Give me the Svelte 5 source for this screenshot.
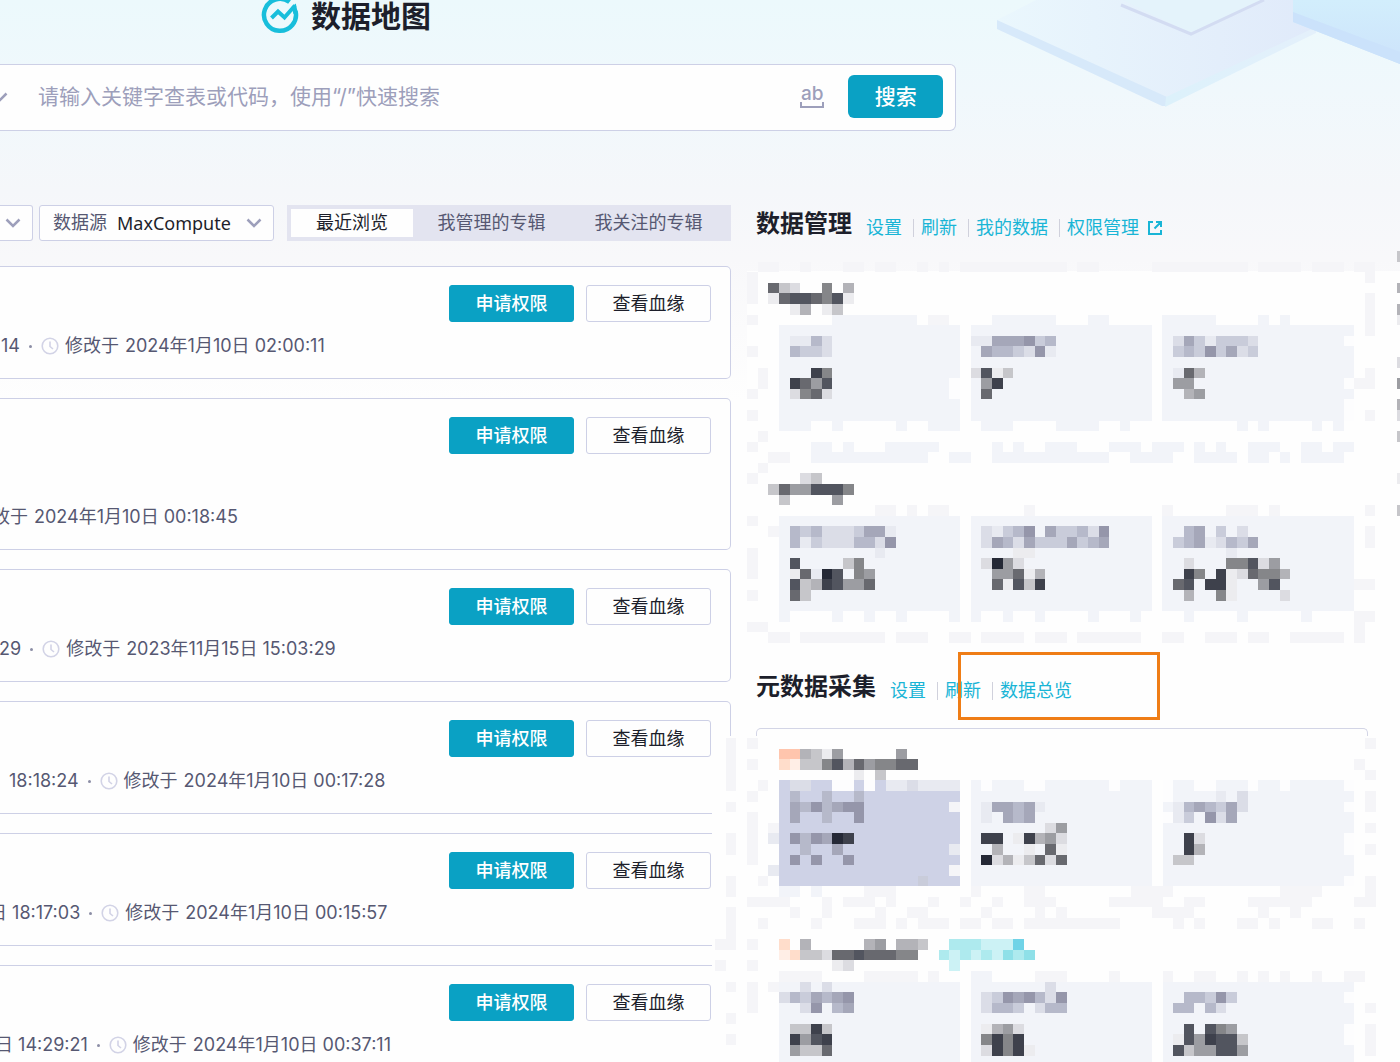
<script>
  const tabs = ['最近浏览', '我管理的专辑', '我关注的专辑'];
  let active = $state(0);

  const tables = [
    { lead: '14', date: '2024年1月10日 02:00:11', shift: 1 },
    { lead: '', date: '2024年1月10日 00:18:45', shift: -26, tall: true },
    { lead: '29', date: '2023年11月15日 15:03:29', shift: -1 },
    { lead: '18:18:24', date: '2024年1月10日 00:17:28', shift: 9 },
    { lead: '日 18:17:03', date: '2024年1月10日 00:15:57', shift: -11 },
    { lead: '日 14:29:21', date: '2024年1月10日 00:37:11', shift: -5 }
  ];

  const palette = {
    0: '#252936', 1: '#3e414c', 2: '#52555f', 3: '#68696f', 4: '#858689',
    5: '#9c9da2', 6: '#b3b3b8', 7: '#c6c6ca', 8: '#dcdce1', 9: '#ececef',
    a: '#9596aa', b: '#a5a7b9', c: '#b6b9ca', d: '#c9ccda', e: '#dbdde7', f: '#e8eaf1',
    t: '#f2f4f9', n: '#f5f5f8', w: '#fdfdfe', u: '#ced2e6',
    o: '#ffc5ad', p: '#ffddcb', q: '#ffeee6',
    x: '#70d3e7', y: '#8fe0e8', z: '#aeeaee', v: '#ccf2f5'
  };

  // Blocks: [column, row, width, height, colour key]
  const manageBlocks = [
    [3, 6, 17, 9, 't'], [21, 6, 17, 9, 't'], [39, 6, 18, 9, 't'],
    [3, 24, 17, 9, 't'], [21, 24, 17, 9, 't'], [39, 24, 18, 9, 't'],
    [8, 5, 8, 1, 't'], [17, 5, 2, 1, 'n'], [23, 5, 6, 1, 't'], [32, 5, 2, 1, 't'], [39, 5, 5, 1, 't'], [48, 5, 1, 1, 't'], [50, 5, 1, 1, 't'],
    [19, 11, 1, 2, 'w'], [56, 7, 1, 1, 'w'], [56, 11, 1, 1, 'w'], [56, 13, 1, 2, 'w'],
    [3, 15, 3, 1, 't'], [8, 15, 1, 1, 't'], [14, 15, 1, 1, 't'], [17, 15, 3, 1, 't'], [22, 15, 3, 1, 't'], [29, 15, 4, 1, 't'], [35, 15, 1, 1, 't'], [46, 15, 1, 1, 't'], [48, 15, 1, 1, 't'], [53, 15, 1, 1, 't'], [55, 15, 1, 1, 't'],
    [1, 0, 2, 1, 'n'], [5, 0, 1, 1, 'n'], [9, 0, 2, 1, 'n'], [12, 0, 2, 1, 'n'], [16, 0, 1, 1, 'n'], [18, 0, 1, 1, 'n'], [20, 0, 10, 1, 'n'], [31, 0, 2, 1, 'n'], [38, 0, 9, 1, 'n'], [48, 0, 4, 1, 'n'], [53, 0, 3, 1, 'n'], [57, 0, 2, 1, 'n'],
    [0, 1, 1, 3, 'n'], [0, 5, 1, 1, 'n'], [0, 8, 1, 1, 'n'], [1, 10, 1, 2, 'n'], [0, 12, 1, 1, 'n'], [0, 14, 1, 1, 'n'], [1, 16, 1, 1, 'n'], [0, 17, 1, 1, 'n'], [2, 18, 2, 1, 'n'], [1, 19, 1, 1, 'n'], [0, 20, 1, 1, 'n'],
    [0, 24, 1, 1, 'n'], [0, 27, 1, 3, 'n'], [2, 25, 1, 1, 'n'], [0, 31, 1, 1, 'n'], [0, 34, 2, 1, 'n'],
    [58, 1, 1, 1, 'n'], [58, 3, 1, 4, 'n'], [58, 10, 1, 2, 'n'], [57, 11, 1, 1, 'n'], [58, 14, 1, 1, 'n'], [58, 23, 1, 1, 'n'], [58, 25, 1, 2, 'n'], [57, 30, 2, 1, 'n'], [57, 33, 2, 1, 'n'], [57, 34, 1, 2, 'n'],
    [6, 17, 2, 1, 't'], [9, 17, 1, 1, 't'], [13, 17, 5, 1, 't'], [23, 17, 1, 1, 't'], [25, 17, 1, 1, 't'], [28, 17, 3, 1, 't'], [34, 17, 3, 1, 't'], [38, 17, 3, 1, 't'], [42, 17, 1, 1, 't'], [44, 17, 1, 1, 't'], [47, 17, 3, 1, 't'], [52, 17, 2, 1, 't'], [55, 17, 2, 1, 't'],
    [6, 18, 11, 1, 't'], [19, 18, 2, 1, 't'], [23, 18, 11, 1, 't'], [36, 18, 4, 1, 't'], [42, 18, 4, 1, 't'], [47, 18, 2, 1, 't'], [50, 18, 1, 1, 't'], [52, 18, 2, 1, 't'], [54, 18, 2, 1, 't'],
    [12, 23, 2, 1, 'n'], [15, 23, 1, 1, 'n'], [17, 23, 2, 1, 'n'], [26, 23, 1, 1, 'n'], [39, 23, 1, 1, 'n'], [45, 23, 3, 1, 'n'], [49, 23, 1, 1, 'n'],
    [3, 33, 1, 1, 't'], [8, 33, 1, 1, 't'], [11, 33, 1, 1, 't'], [14, 33, 1, 1, 't'], [19, 33, 1, 1, 't'], [21, 33, 1, 1, 't'], [24, 33, 1, 1, 't'], [27, 33, 1, 1, 't'], [32, 33, 1, 1, 't'], [36, 33, 1, 1, 't'], [41, 33, 1, 1, 't'], [46, 33, 1, 1, 't'], [52, 33, 1, 1, 't'],
    [2, 35, 2, 1, 'n'], [5, 35, 8, 1, 'n'], [14, 35, 3, 1, 'n'], [19, 35, 2, 1, 'n'], [22, 35, 4, 1, 'n'], [27, 35, 3, 1, 'n'], [31, 35, 6, 1, 'n'], [39, 35, 2, 1, 'n'], [43, 35, 3, 1, 'n'], [47, 35, 2, 1, 'n'], [51, 35, 5, 1, 'n'],
    [61, -1, 1, 1, '7'], [61, 2, 1, 1, '6'], [61, 4, 1, 1, '6'], [61, 5, 1, 1, '9'], [61, 9, 1, 1, '8'], [61, 11, 1, 1, '5'], [61, 13, 1, 1, '6'], [61, 14, 1, 1, '8'], [61, 16, 1, 1, '7'], [61, 20, 1, 1, '9'], [61, 23, 1, 1, '7']
  ];
  // Sprites: [column, row, rows of colour keys]
  const manageSprites = [
    [2, 2, ['378..4.6', '93223429', '..96.97']],
    [4, 7, ['ffce', 'cdde', '', '..14', '1352', '8438']],
    [21, 7, ['ffbbbadc', '.bccdeaf', '', '8297', '.51', '.3']],
    [40, 7, ['ebdfddde', 'dcdadbed', '', 'f36', '55', '.65']],
    [2, 20, ['...87', '73552224', '.7....5']],
    [4, 25, ['cdceeedbbf', 'cfdeeeccea', '........f', '2....74', '93f02.45', '27612553', '37']],
    [22, 25, ['efdca.bddcea', 'ebcebdddbdcb', '...99', '8058', '.55396', '.39271']],
    [40, 25, ['.cb.d.e', 'dcbfecdb', '.....f', '.8...44285', '.14.1983446', '32.119..52', '.6..49....8']]
  ];

  const collectBlocks = [
    [3, 4, 17, 10, 'u'], [21, 4, 17, 10, 't'], [39, 4, 18, 10, 't'],
    [3, 23, 17, 8, 't'], [21, 23, 17, 8, 't'], [39, 23, 18, 8, 't'],
    [4, 4, 2, 1, 'e'], [8, 4, 2, 1, 'w'], [11, 4, 1, 1, 'w'], [13, 4, 2, 1, 'f'], [15, 4, 1, 1, 'e'], [16, 4, 4, 1, 'f'], [19, 6, 1, 1, 'n'], [19, 10, 1, 1, 'f'], [19, 12, 1, 1, 'n'], [16, 13, 1, 1, 'd'],
    [2, 8, 1, 1, 'n'], [2, 9, 1, 1, 'f'], [2, 12, 1, 1, 'f'],
    [22, 4, 1, 1, 'w'], [26, 4, 2, 1, 'w'], [34, 4, 1, 1, 'w'], [39, 4, 1, 2, 'w'], [42, 4, 2, 1, 'w'], [47, 4, 1, 1, 'w'], [50, 4, 1, 1, 'w'], [56, 4, 1, 1, 'w'], [56, 6, 1, 1, 'w'], [56, 9, 1, 2, 'w'], [39, 7, 1, 1, 'w'], [56, 13, 1, 1, 'w'],
    [-2, 0, 1, 5, 'n'], [-2, 6, 1, 1, 'n'], [-2, 9, 1, 2, 'n'], [-2, 13, 1, 2, 'n'], [-2, 16, 1, 3, 'n'], [-3, 19, 2, 1, 'n'], [-3, 21, 1, 1, 'n'], [-2, 23, 1, 1, 'n'], [-2, 26, 1, 1, 'n'], [-2, 28, 1, 1, 'n'],
    [0, 0, 1, 1, 'n'], [0, 2, 1, 1, 'n'], [1, 4, 1, 1, 'n'], [0, 5, 1, 1, 'n'], [0, 7, 1, 5, 'n'], [1, 13, 1, 1, 'n'], [0, 15, 4, 1, 'n'], [1, 17, 1, 1, 'n'], [0, 19, 1, 1, 'n'], [0, 21, 1, 1, 'n'], [0, 23, 1, 3, 'n'],
    [3, 14, 2, 1, 't'], [6, 14, 1, 1, 't'], [11, 14, 3, 1, 'n'], [21, 14, 1, 1, 'n'], [26, 14, 2, 1, 'n'], [36, 14, 4, 1, 'n'], [50, 14, 4, 1, 'n'],
    [7, 15, 1, 2, 'n'], [9, 15, 3, 1, 'n'], [13, 15, 1, 1, 'n'], [17, 15, 1, 1, 'n'], [20, 15, 1, 1, 'n'], [23, 15, 1, 1, 'n'], [26, 15, 3, 1, 'n'], [34, 15, 5, 1, 'n'], [41, 15, 2, 1, 'n'], [47, 15, 6, 1, 'n'], [57, 15, 2, 1, 'n'],
    [4, 16, 1, 1, 'n'], [12, 16, 1, 1, 'n'], [15, 16, 2, 1, 'n'], [22, 16, 1, 1, 'n'], [27, 16, 1, 1, 'n'], [29, 16, 1, 1, 'n'], [38, 16, 4, 1, 'n'], [48, 16, 1, 1, 'n'], [51, 16, 1, 1, 'n'],
    [6, 17, 1, 1, 'n'], [10, 17, 3, 1, 'n'], [14, 17, 1, 1, 'n'], [16, 17, 3, 1, 'n'], [20, 17, 2, 1, 'n'], [23, 17, 2, 1, 'n'], [26, 17, 9, 1, 'n'], [40, 17, 1, 1, 'n'], [42, 17, 1, 1, 'n'], [46, 17, 2, 1, 'n'], [49, 17, 1, 1, 'n'], [53, 17, 2, 1, 'n'], [57, 17, 1, 1, 'n'],
    [3, 22, 4, 1, 'n'], [11, 22, 5, 1, 'n'], [17, 22, 1, 1, 'n'], [21, 22, 2, 1, 't'], [27, 22, 3, 1, 'n'], [34, 22, 1, 1, 'n'], [39, 22, 1, 1, 'n'], [42, 22, 2, 1, 'n'], [46, 22, 1, 1, 'n'], [48, 22, 1, 1, 'n'], [50, 22, 1, 1, 'n'], [53, 22, 1, 1, 'n'], [56, 22, 2, 1, 'n'],
    [2, 23, 1, 1, 'n'], [56, 24, 1, 1, 'w'], [56, 27, 1, 2, 'w'],
    [58, 0, 1, 1, 'n'], [57, 2, 1, 1, 'n'], [58, 3, 1, 1, 'n'], [58, 5, 1, 2, 'n'], [58, 8, 1, 1, 'n'], [58, 10, 1, 1, 'n'], [58, 13, 1, 2, 'n'], [58, 25, 1, 1, 'n'], [58, 27, 1, 3, 'n']
  ];
  const collectSprites = [
    [3, 1, ['oo6795.....5', 'pq77426354433', '.......9.7']],
    [4, 5, ['c..c..c', 'bcacbaa', 'b..c..a', '', 'acab01', '.c..b', 'a.a..a']],
    [22, 6, ['fbbcbf', 'f.bcb', '......85', '11.91658', '.6..9.39', '08697383']],
    [40, 5, ['....f.e', 'fcbcdbe', 'fd.aeb', '', '.18', '.16', '77']],
    [3, 19, ['p.6.....65.667', 'qp77833233344', '.....98']],
    [18, 19, ['.zzzvvvx', 'zvzvzvyzy', '.v']],
    [3, 23, ['..e.e', 'ecdbcba', '..ea.cb', '', '.7717', '.1521', '.5773']],
    [22, 23, ['......e', 'edabacea', 'eccd.ecc', '', '9658', '4141', '81419']],
    [40, 24, ['.ccdad', 'cc.ce', '', '.2.245', '9251227', '2755225']]
  ];

  function cells(blocks, sprites) {
    const out = blocks.map(([x, y, w, h, k]) => ({ x, y, w, h, fill: palette[k] }));
    for (const [c, r, rows] of sprites) {
      rows.forEach((line, j) => {
        [...line].forEach((k, i) => {
          if (k !== '.') out.push({ x: c + i, y: r + j, w: 1, h: 1, fill: palette[k] });
        });
      });
    }
    return out;
  }

  const manageCells = cells(manageBlocks, manageSprites);
  const collectCells = cells(collectBlocks, collectSprites);
</script>

{#snippet chevron()}
  <svg class="chevron" viewBox="0 0 16 10" aria-hidden="true"><path d="M1.500 1.500 8 8l6.500-6.500" /></svg>
{/snippet}

<div class="page">
  <svg class="decor" viewBox="0 0 404 108" aria-hidden="true">
    <defs>
      <linearGradient id="slab" x1="0" y1="0" x2="1" y2="0">
        <stop offset="0" stop-color="#eaf7fd" />
        <stop offset="1" stop-color="#e0eafa" />
      </linearGradient>
      <linearGradient id="edge" x1="0" y1="0" x2="1" y2="0">
        <stop offset="0" stop-color="#dcf1fb" />
        <stop offset="1" stop-color="#e4f0fb" />
      </linearGradient>
      <linearGradient id="cube" x1="0" y1="0" x2="0" y2="1">
        <stop offset="0" stop-color="#d2eefc" />
        <stop offset="1" stop-color="#cde3fb" />
      </linearGradient>
    </defs>
    <path d="M1 20 40 0H320V29L170 98Z" fill="url(#slab)" />
    <path d="M1 20V29L166 106H171V97Z" fill="#d7e9fa" />
    <path d="M169 107 320 33V27L170 97Z" fill="url(#edge)" />
    <path d="M127 0 194 33 266 0Z" fill="#e4f3fb" />
    <path d="M125 5 195 34 268 0" fill="none" stroke="#d3dcf2" stroke-width="3" />
    <path d="M297 0H404V64L297 22Z" fill="url(#cube)" />
    <path d="M297 12 404 52V64L297 22Z" fill="#cbe2fb" />
  </svg>

  <header class="brand">
    <svg class="logo" viewBox="0 0 38 38" aria-hidden="true">
      <path d="M28.500 6A16 16 0 1 0 34.500 15" fill="none" stroke="#18bedb" stroke-width="4.500" />
      <path d="M10.500 22 17 15.500 23.500 21.500 34 9.500" fill="none" stroke="#18bedb" stroke-width="4" />
      <path d="M30.500 11 34.800 7.500 37 18H32.500Z" fill="#18bedb" />
    </svg>
    <h1>数据地图</h1>
  </header>

  <form class="search" onsubmit={(e) => e.preventDefault()}>
    <button type="button" class="scope" aria-label="搜索范围">{@render chevron()}</button>
    <input type="text" aria-label="搜索" placeholder="请输入关键字查表或代码，使用“/”快速搜索" />
    <button type="button" class="exact" aria-label="全词匹配"><span>ab</span><i></i></button>
    <button type="submit" class="submit">搜索</button>
  </form>

  <main>
    <section class="browse">
      <div class="filters">
        <button type="button" class="cut" aria-label="类型">{@render chevron()}</button>
        <div class="source">
          <label for="source">数据源</label>
          <select id="source"><option>MaxCompute</option></select>
          {@render chevron()}
        </div>
        <div class="tabs">
          {#each tabs as tab, i}
            <button type="button" class:active={active === i} onclick={() => (active = i)}>{tab}</button>
          {/each}
        </div>
      </div>

      {#each tables as t}
        <article class="card" class:tall={t.tall}>
          <div class="actions">
            <button type="button" class="primary">申请权限</button>
            <button type="button">查看血缘</button>
          </div>
          <p class="meta" style:margin-left="{t.shift}px">
            {#if t.lead}
              <span>{t.lead}</span><b></b>
              <svg class="clock" viewBox="0 0 18 18" aria-hidden="true">
                <circle cx="9" cy="9" r="7.800" /><path d="M9 4.500V9.500L12 12" />
              </svg>
            {/if}
            <span>修改于</span>
            <span class="date">{t.date}</span>
          </p>
        </article>
      {/each}
    </section>

    <aside>
      <div class="head">
        <h2>数据管理</h2>
        <nav>
          <a href="#settings">设置</a>
          <a href="#refresh">刷新</a>
          <a href="#mine">我的数据</a>
          <a href="#access">权限管理
            <svg class="ext" viewBox="0 0 16 16" aria-hidden="true"><path d="M6 2H2V14H14V10M9 2H14V7M14 2 7.500 8.500" /></svg>
          </a>
        </nav>
      </div>
      <svg class="mosaic" viewBox="0 -1 61.300 37" preserveAspectRatio="none" shape-rendering="crispEdges" aria-hidden="true">
        <rect x="0" y="0.900" width="61.300" height="36" fill="#fefefe" />
        {#each manageCells as c}
          <rect x={c.x} y={c.y} width={c.w} height={c.h} fill={c.fill} />
        {/each}
      </svg>

      <div class="head second">
        <h2>元数据采集</h2>
        <nav>
          <a href="#collect-settings">设置</a>
          <a href="#collect-refresh">刷新</a>
          <a href="#overview">数据总览</a>
        </nav>
        <div class="marker"></div>
      </div>
      <div class="panel-top"></div>
      <svg class="mosaic lower" viewBox="-3.300 -0.200 64.600 30.800" preserveAspectRatio="none" shape-rendering="crispEdges" aria-hidden="true">
        <rect x="-3.300" y="-0.200" width="64.600" height="31" fill="#fefefe" />
        {#each collectCells as c}
          <rect x={c.x} y={c.y} width={c.w} height={c.h} fill={c.fill} />
        {/each}
      </svg>
    </aside>
  </main>
</div>

<style>
  :global(body) {
    margin: 0;
    background: #fefefe;
  }
  .page {
    position: relative;
    height: 100vh;
    overflow: hidden;
    color: #1d1f2b;
    font-family: Inter, 'Noto Sans CJK SC', sans-serif;
    font-size: 18px;
    line-height: 26px;
    background: linear-gradient(#ecf9fc 0, #f0f8fc 90px, #f5f7fa 190px, #f8f8fa 260px, #fefefe 400px);
  }
  .page * {
    box-sizing: border-box;
  }
  button,
  input,
  select {
    font: inherit;
    color: inherit;
    margin: 0;
    padding: 0;
    border: 0;
    background: none;
  }
  button {
    cursor: pointer;
    white-space: nowrap;
  }
  h1,
  h2,
  p {
    margin: 0;
  }
  .decor {
    position: absolute;
    top: 0;
    right: 0;
    width: 404px;
    height: 108px;
  }
  .brand {
    position: relative;
    display: flex;
    align-items: flex-start;
    gap: 12px;
    height: 64px;
    padding-left: 261px;
  }
  .brand h1 {
    font-size: 30px;
    line-height: 32px;
    font-weight: 700;
  }
  .logo {
    width: 38px;
    height: 38px;
    margin-top: -4px;
  }
  .search {
    position: relative;
    display: flex;
    align-items: center;
    width: 68.300%;
    height: 67px;
    padding: 0 12px 2px 0;
    border: 1px solid #cdd0e6;
    border-left: 0;
    border-radius: 0 6px 6px 0;
    background: #fefefe;
  }
  .chevron {
    flex: none;
    width: 16px;
    height: 10px;
    fill: none;
    stroke: #9d9fbb;
    stroke-width: 2.500;
  }
  .scope {
    display: flex;
    flex: none;
    justify-content: flex-end;
    width: 38px;
    padding-right: 30px;
  }
  .search input {
    flex: 1;
    min-width: 0;
    height: 40px;
    font-size: 21px;
    outline: none;
  }
  .search input::placeholder {
    color: #9d9fbb;
    opacity: 1;
  }
  .exact {
    display: flex;
    flex-direction: column;
    align-items: center;
    width: 26px;
    margin-right: 23px;
    color: #9d9fbb;
    font-size: 19px;
    font-weight: 500;
    line-height: 16px;
  }
  .exact i {
    width: 24px;
    height: 6px;
    border: 2px solid #9d9fbb;
    border-top: 0;
  }
  .submit {
    width: 95px;
    height: 43px;
    border-radius: 6px;
    background: #0aa1c4;
    color: #fff;
    font-size: 21px;
    font-weight: 500;
  }
  main {
    position: relative;
    display: grid;
    grid-template-columns: 731fr 644fr;
    align-items: start;
    gap: 25px;
    padding-top: 74px;
  }
  .browse {
    display: flex;
    flex-direction: column;
    gap: 19px;
    min-width: 0;
  }
  .filters {
    display: flex;
    height: 36px;
    margin-bottom: 6px;
  }
  .cut,
  .source {
    display: flex;
    align-items: center;
    border: 1px solid #cdd0e6;
    border-radius: 3px;
    background: #fefefe;
  }
  .cut {
    flex: none;
    width: 33px;
    margin-right: 6px;
    padding-left: 5px;
    border-left: 0;
    border-radius: 0 3px 3px 0;
  }
  .source {
    width: 235px;
    margin-right: 13px;
    padding: 0 11px 0 13px;
  }
  .source label {
    flex: none;
    margin-right: 10px;
    color: #565872;
  }
  .source select {
    flex: 1;
    min-width: 0;
    appearance: none;
    font-family: 'Noto Sans', sans-serif;
    font-size: 18px;
  }
  .tabs {
    display: flex;
    flex: 1;
    padding: 4px;
    background: #e3e4f0;
  }
  .tabs button {
    flex: 157;
    color: #565872;
  }
  .tabs button:first-child {
    flex: 122;
  }
  .tabs .active {
    background: #fefefe;
    color: #1d1f2b;
  }
  .card {
    display: flex;
    flex-direction: column;
    justify-content: space-between;
    height: 113px;
    padding: 18px 19px 19px 0;
    border: 1px solid #cdd0e6;
    border-left: 0;
    border-radius: 0 5px 5px 0;
    background: #fefefe;
  }
  .card.tall {
    height: 152px;
  }
  .actions {
    display: flex;
    justify-content: flex-end;
    gap: 12px;
  }
  .actions button {
    width: 125px;
    height: 37px;
    border: 1px solid #cdd0e6;
    border-radius: 3px;
  }
  .actions .primary {
    border-color: #0aa1c4;
    background: #0aa1c4;
    color: #fff;
    font-weight: 500;
  }
  .meta {
    display: flex;
    align-items: center;
    color: #565872;
    white-space: nowrap;
  }
  .meta b {
    width: 3px;
    height: 3px;
    margin: 0 9px;
    border-radius: 50%;
    background: #8c8ea6;
  }
  .date {
    margin-left: 6px;
  }
  .clock {
    flex: none;
    width: 18px;
    height: 18px;
    margin-right: 6px;
    fill: none;
    stroke: #d2d3e6;
    stroke-width: 1.600;
  }
  .head {
    position: relative;
    display: flex;
    align-items: center;
    gap: 14px;
    height: 38px;
  }
  .head h2 {
    font-size: 24px;
    line-height: 36px;
    font-weight: 700;
  }
  .head nav {
    display: flex;
    padding-top: 8px;
  }
  .head a {
    display: flex;
    align-items: center;
    color: #19b5d6;
    text-decoration: none;
    white-space: nowrap;
  }
  .head a + a::before {
    content: '';
    width: 1px;
    height: 18px;
    margin: 0 7px 0 11px;
    background: #d0d1dc;
  }
  .ext {
    width: 16px;
    height: 16px;
    margin-left: 8px;
    fill: none;
    stroke: #19b5d6;
    stroke-width: 2;
  }
  .mosaic {
    display: block;
    width: calc(100% + 9px);
    height: 392px;
    margin: 8px 0 0 -9px;
  }
  .mosaic.lower {
    position: relative;
    width: calc(100% + 44px);
    height: 326px;
    margin: 0 0 0 -44px;
  }
  .head.second {
    margin-top: 25px;
  }
  .marker {
    position: absolute;
    top: -16px;
    left: 202px;
    width: 202px;
    height: 68px;
    border: 3px solid #ef7d16;
  }
  .panel-top {
    height: 8px;
    margin: 22px 32px 0 0;
    border: 1px solid #d3d5e6;
    border-bottom: 0;
    border-radius: 5px 5px 0 0;
  }
</style>
